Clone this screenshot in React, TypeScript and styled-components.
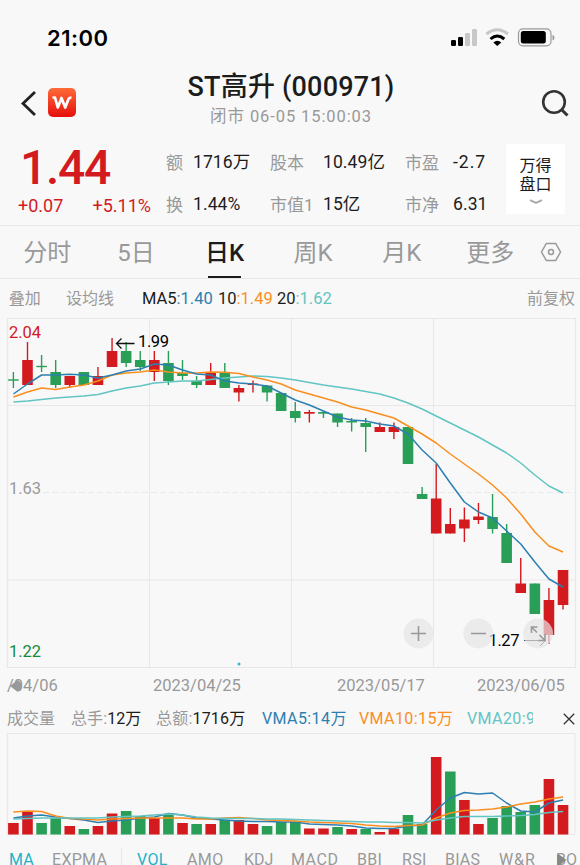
import * as React from "react";
import styled, { createGlobalStyle } from "styled-components";

const RED = "#d31a1f";
const GREEN = "#299e57";
const BLUE = "#2c7fb0";
const ORANGE = "#fa8e1e";
const TEAL = "#62c4c3";
const GREY = "#999";
const LINE = "#e8e8e8";

const GlobalStyle = createGlobalStyle`
  * {
    box-sizing: border-box;
  }
  body {
    margin: 0;
    background: #f8f8f8;
    overflow: hidden;
  }
`;

const Screen = styled.div`
  display: flex;
  flex-direction: column;
  width: 580px;
  height: 865px;
  overflow: hidden;
  background: #f8f8f8;
  color: #1c1c1c;
  font-family: Roboto, "Noto Sans CJK SC", sans-serif;
  font-size: 17px;
  line-height: 1;
  white-space: nowrap;
`;

const StatusBar = styled.div`
  display: flex;
  flex: none;
  align-items: center;
  height: 66px;
  padding: 9px 25px 0 47px;
`;

const Clock = styled.div`
  flex: 1;
  color: #000;
  font: 600 22px/1 Inter, sans-serif;
  letter-spacing: 0.5px;
`;

const Header = styled.div`
  display: flex;
  flex: none;
  align-items: flex-start;
  height: 66px;
  padding: 0 10px 0 20px;
`;

const HeaderSide = styled.div<{ $right?: boolean }>`
  display: flex;
  gap: 11px;
  width: ${({ $right }) => ($right ? 68 : 60)}px;
  padding-top: 22px;
  justify-content: ${({ $right }) => ($right ? "flex-end" : "flex-start")};
`;

const AppLogo = styled.div`
  flex: none;
  width: 28px;
  height: 29px;
  border-radius: 5px;
  background: linear-gradient(#ff6b38, #e50f0c);
`;

const TitleBlock = styled.div`
  flex: 1;
  display: flex;
  flex-direction: column;
  align-items: center;
  padding-top: 8px;
`;

const Title = styled.div`
  height: 27px;
  font-size: 27px;
  font-weight: 500;
  letter-spacing: 0.2px;
`;

const Subtitle = styled.div`
  margin-top: 8px;
  color: ${GREY};
  font-size: 16.5px;
  letter-spacing: 0.9px;
`;

const Quote = styled.div`
  display: flex;
  flex: none;
  height: 94px;
  padding-right: 15px;
  border-bottom: 1px solid ${LINE};
`;

const PriceBlock = styled.div`
  width: 166px;
  padding: 12px 15px 0 18px;
  color: ${RED};
`;

const Price = styled.div`
  padding-left: 2px;
  font-size: 48px;
  font-weight: 500;
  letter-spacing: -1.3px;
`;

const Changes = styled.div`
  display: flex;
  justify-content: space-between;
  margin-top: 5px;
  font-size: 18px;
`;

const Stats = styled.div`
  display: grid;
  flex: 1;
  grid-template-columns: 27px 77px 53px 82px 48px 1fr;
  grid-template-rows: 42px 42px;
  align-items: center;
  padding-top: 10px;
`;

const StatLabel = styled.span`
  position: relative;
  color: ${GREY};
`;

const StatValue = styled.span<{ $wide?: boolean }>`
  font-size: 17.5px;
  letter-spacing: ${({ $wide }) => ($wide ? 1 : 0.1)}px;
`;

const Panel = styled.div`
  display: flex;
  flex-direction: column;
  align-items: center;
  width: 59px;
  height: 70px;
  margin-top: 12px;
  padding-top: 12px;
  background: #fff;
  font-size: 16px;
  line-height: 19px;
`;

const Chevron = styled.svg`
  margin-top: 5px;
`;

const Tabs = styled.div`
  display: flex;
  flex: none;
  align-items: center;
  height: 53px;
  padding-left: 3px;
  border-bottom: 1px solid ${LINE};
`;

const Tab = styled.div<{ $active?: boolean }>`
  display: flex;
  flex-direction: column;
  align-items: center;
  width: 88.6px;
  height: 53px;
  padding-top: 15px;
  color: ${({ $active }) => ($active ? "#1c1c1c" : GREY)};
  font-size: 24px;
  font-weight: ${({ $active }) => ($active ? 500 : 400)};

  &::after {
    content: "";
    width: 33px;
    height: 2px;
    margin-top: 11px;
    background: ${({ $active }) => ($active ? "#1c1c1c" : "transparent")};
  }
`;

const Settings = styled.div`
  display: flex;
  margin-left: 5px;
`;

const Legend = styled.div<{ $height: number }>`
  display: flex;
  flex: none;
  align-items: center;
  height: ${({ $height }) => $height}px;
  padding: 0 4px 0 7px;
`;

const Cell = styled.span<{
  $w?: number;
  $color?: string;
  $size?: number;
  $ls?: number;
  $clip?: boolean;
}>`
  flex: none;
  overflow: ${({ $clip }) => ($clip ? "hidden" : "visible")};
  width: ${({ $w }) => ($w ? `${$w}px` : "auto")};
  color: ${({ $color }) => $color || GREY};
  font-size: ${({ $size }) => $size || 16}px;
  line-height: 24px;
  letter-spacing: ${({ $ls }) => $ls || 0}px;
`;

const Part = styled.span<{ $color: string }>`
  color: ${({ $color }) => $color};
`;

const CloseIcon = styled.svg`
  margin-left: 30px;
`;

const Chart = styled.svg`
  display: block;
  flex: none;
  font-family: Roboto, sans-serif;
`;

const Dates = styled.div`
  position: relative;
  display: flex;
  flex: none;
  align-items: center;
  height: 36px;
  padding-left: 7px;
`;

const Indicators = styled.div`
  position: relative;
  display: flex;
  flex: none;
  align-items: center;
  height: 50px;
  padding-left: 9px;
`;

// scroll hints that lie over the first date and the last indicator
const ScrollHint = styled.svg<{ $left: number; $top: number }>`
  position: absolute;
  left: ${({ $left }) => $left}px;
  top: ${({ $top }) => $top}px;
`;

const Divider = styled.i`
  flex: none;
  width: 1px;
  height: 24px;
  margin-right: 15px;
  background: ${LINE};
`;

type Candle = [color: string, high: number, top: number, bottom: number, low: number];

const CANDLES: Candle[] = [
  [GREEN, 372, 379.3, 380.7, 388],
  [RED, 342, 360, 385, 385],
  [GREEN, 355, 365.8, 367.2, 372],
  [GREEN, 360, 372, 385, 388],
  [RED, 376, 376, 385, 388],
  [GREEN, 372, 372, 385, 385],
  [RED, 367, 376, 385, 385],
  [RED, 338, 351, 367, 367],
  [GREEN, 342, 351, 363, 367],
  [GREEN, 351, 360, 367, 371],
  [RED, 351, 360, 372, 381],
  [GREEN, 351, 363, 381, 385],
  [GREEN, 360, 373, 376, 380],
  [GREEN, 376, 381, 385, 388],
  [RED, 363, 372, 385, 385],
  [GREEN, 363, 372, 388, 388],
  [RED, 385, 388, 392.5, 401.5],
  [RED, 380.5, 383.5, 385, 392.5],
  [GREEN, 385, 385.5, 392.5, 401.5],
  [GREEN, 393, 393, 411, 411],
  [GREEN, 402, 411, 418, 422.5],
  [RED, 410, 412, 413.7, 422.5],
  [GREEN, 411, 412, 413.7, 418],
  [GREEN, 413.5, 413.5, 422.5, 427],
  [GREEN, 418, 421, 422.5, 431.5],
  [GREEN, 418, 423, 427, 452],
  [RED, 422.5, 427, 432, 432],
  [RED, 422.5, 427, 432, 439],
  [GREEN, 427, 427, 464, 464],
  [GREEN, 487, 494, 499, 499],
  [RED, 464, 498.5, 533.5, 533.5],
  [RED, 508, 524, 533.5, 533.5],
  [RED, 507.5, 519.5, 528.5, 542],
  [RED, 503, 516.5, 520, 524],
  [GREEN, 494, 517, 529, 533.5],
  [GREEN, 524, 533, 563, 563],
  [RED, 558, 583.5, 593, 593],
  [GREEN, 583.5, 583.5, 614, 614],
  [RED, 588, 600, 635, 644],
  [RED, 570, 570, 605, 609.5],
];

const MA5 = [394, 384, 375, 375, 374.3, 375, 378, 375, 371, 369, 364, 365, 370, 374, 375, 381, 383, 384, 386, 393, 400, 405, 411, 417, 420, 421, 424, 426, 434, 450, 463, 483, 502, 512, 518, 531, 544, 562, 579, 587];
const MA10 = [397, 392, 388, 389.5, 387, 385, 381, 375, 373, 372, 370, 372, 373, 373, 372, 372.3, 373.5, 377, 380, 384, 390, 394, 398, 402, 407, 410, 414, 418, 426, 434, 443, 454, 464, 474, 485, 498, 514, 532, 546, 552];
const MA20 = [402, 401, 399.5, 398, 397, 396, 394.5, 391, 388, 386, 383, 382, 381, 381, 379.5, 378, 377, 376, 376.5, 378, 380, 382.5, 385, 387, 389, 391.5, 394, 398, 403, 409, 416, 423, 430, 437, 445, 453, 463, 475, 486, 493];

const VOLUMES = [823, 811, 823, 818, 826, 829, 826, 813.5, 811, 816, 818, 815, 823, 824, 824, 820, 820, 824, 826, 822, 822, 828.5, 828.5, 827, 829, 829, 832, 829, 815, 824, 757, 771.5, 800, 824, 818, 806, 812, 805, 779, 805];
const VOLUME_COLORS = "rrggrgrrggrgrgrgrrgggrrgrgrrggrgrrggggrr";
const VMA5 = [818, 816, 815, 817, 818.5, 820, 822.5, 821, 820, 818, 817, 813.5, 815, 818, 819, 820, 821, 821.5, 821.5, 822, 822, 824, 824.5, 825, 826, 828, 828.5, 828.5, 826, 825, 810, 798, 792.5, 794, 793, 803, 811, 812, 803, 800];
const VMA10 = [812, 811, 811.5, 816, 818.5, 819, 820, 819, 818.5, 818, 818, 818, 818, 819, 819, 818, 817.5, 818.5, 820, 820.5, 821, 822, 822.5, 823, 823.5, 825, 826, 826.5, 825.5, 825, 818, 813, 810.5, 810, 809, 807, 804, 802, 799, 797];
const VMA20 = [819, 818.5, 818, 818, 818, 818, 818, 817, 816.5, 816, 815, 814, 815, 817, 818, 818.5, 818.5, 818.5, 819, 819, 819.5, 820, 820.5, 821, 821.5, 822, 822, 822.5, 822.5, 823, 820, 818, 816.5, 816.5, 816.5, 816, 815.5, 814.5, 812.5, 811.5];

const xAt = (i: number): number => 13.4 + i * 14.093;

const Average: React.FC<{ data: number[]; color: string }> = ({ data, color }) => (
  <polyline
    points={data.map((y, i) => `${xAt(i)},${y}`).join(" ")}
    fill="none"
    stroke={color}
    strokeWidth="1.5"
    strokeLinejoin="round"
  />
);

const PriceChart: React.FC = () => (
  <Chart width="580" height="350" viewBox="0 318 580 350">
    <g stroke={LINE} fill="none">
      <path d="M7 318.5H575.5V667.5M7 667.5H576M7 405.5H575M7 580H575" strokeWidth="1.2" />
      <path d="M7.5 318V668" strokeWidth="1.5" />
      <path d="M149.5 318V667M291.5 318V667M433.5 318V667" />
      <path d="M43 492.5H575" strokeDasharray="6 3" />
    </g>
    {CANDLES.map(([color, high, top, bottom, low], i) => (
      <g key={i} fill={color}>
        <rect x={xAt(i) - 0.7} y={high} width="1.4" height={low - high} />
        <rect x={xAt(i) - 5.3} y={top} width="10.6" height={bottom - top} />
      </g>
    ))}
    <Average data={MA20} color={TEAL} />
    <Average data={MA10} color={ORANGE} />
    <Average data={MA5} color={BLUE} />
    <g fontSize="16.5">
      <text x="9" y="337.5" fill={RED} textLength="32">2.04</text>
      <text x="9" y="493.5" fill={GREY} textLength="32">1.63</text>
      <text x="9" y="657" fill="#148a3c" textLength="32">1.22</text>
      <text x="138" y="347" fill="#000" textLength="31">1.99</text>
      <text x="488.5" y="645.5" fill="#000" textLength="31">1.27</text>
    </g>
    <path d="M134.5 343.5H116.5M121.5 338.5L116.5 343.5L121.5 348.5" fill="none" stroke="#111" strokeWidth="1.3" />
    <path d="M524 640.5H545M540 635L545.5 640.5L540 646" fill="none" stroke="#333" strokeWidth="1" />
    <circle cx="239" cy="664" r="1.5" fill="#39b4c8" />
    <g fill="#e5e5e5" fillOpacity=".7">
      <circle cx="418.5" cy="633.5" r="15" />
      <circle cx="478.3" cy="633.5" r="15" />
      <circle cx="538" cy="633.5" r="15" />
    </g>
    <g fill="none" stroke={GREY} strokeWidth="1.6">
      <path d="M411 633.5H426M418.5 626V641M471 633.5H486" />
      <path d="M531.5 633V627H537.5M531.5 627L537 632.5M539.5 635L545 640.5M545 634V640.5H538.5" />
    </g>
  </Chart>
);

const VolumeChart: React.FC = () => (
  <Chart width="580" height="102" viewBox="0 733 580 102">
    <path d="M7 733.5H575M575 733V834.5M7 834.5H575" fill="none" stroke={LINE} />
    <path d="M7.5 733V835" stroke={LINE} strokeWidth="1.5" />
    {VOLUMES.map((top, i) => (
      <rect
        key={i}
        x={xAt(i) - 5.3}
        y={top}
        width="10.6"
        height={834.5 - top}
        fill={VOLUME_COLORS[i] === "r" ? RED : GREEN}
      />
    ))}
    <Average data={VMA5} color={BLUE} />
    <Average data={VMA10} color={ORANGE} />
    <Average data={VMA20} color={TEAL} />
  </Chart>
);

const StatusIcons: React.FC = () => (
  <svg width="105" height="20" viewBox="450 28 105 20">
    <rect x="451" y="40" width="5" height="6" rx="1.3" />
    <rect x="458" y="37" width="5" height="9" rx="1.3" />
    <g fill="#c8c8c8">
      <rect x="465" y="33" width="5" height="13" rx="1.3" />
      <rect x="472" y="29" width="5" height="17" rx="1.3" />
    </g>
    <g fill="none" strokeWidth="3">
      <path d="M486.5 34Q497.3 25.5 508 34" stroke="#c8c8c8" />
      <path d="M490.5 39Q497.3 33 504.3 39" stroke="#000" />
    </g>
    <path d="M493.3 42.5Q497.3 39 501.3 42.5L497.3 46Z" />
    <rect x="518.5" y="28.8" width="32.5" height="17" rx="4.5" fill="none" stroke="#999" strokeWidth="1.2" />
    <rect x="520.8" y="31" width="25" height="12.6" rx="2.5" />
    <path d="M552.5 35V40.5Q554.5 40 554.5 37.7T552.5 35" fill="#999" />
  </svg>
);

const App: React.FC = (): React.ReactElement => {
  return (
    <Screen>
      <GlobalStyle />
      <StatusBar>
        <Clock>21:00</Clock>
        <StatusIcons />
      </StatusBar>
      <Header>
        <HeaderSide>
          <svg width="17" height="29" viewBox="0 0 17 29">
            <path d="M15 4L3 15.5L15 27" fill="none" stroke="#222" strokeWidth="2.8" />
          </svg>
          <AppLogo>
            <svg width="28" height="29" viewBox="0 0 28 29">
              <path
                d="M4.5 9.5H7L9.8 19.5L13.5 10L17.2 19.5L20.5 11Q21.2 9.5 23.5 9.5"
                fill="none"
                stroke="#fff"
                strokeWidth="2.7"
                strokeLinejoin="round"
              />
            </svg>
          </AppLogo>
        </HeaderSide>
        <TitleBlock>
          <Title>ST高升 (000971)</Title>
          <Subtitle>闭市 06-05 15:00:03</Subtitle>
        </TitleBlock>
        <HeaderSide $right>
          <svg width="30" height="30" viewBox="540 88 30 30">
            <circle cx="554" cy="102" r="10.8" fill="none" stroke="#333" strokeWidth="2.6" />
            <path d="M561.5 109.5L567.5 115.5" stroke="#333" strokeWidth="3" />
          </svg>
        </HeaderSide>
      </Header>
      <Quote>
        <PriceBlock>
          <Price>1.44</Price>
          <Changes>
            <span>+0.07</span>
            <span>+5.11%</span>
          </Changes>
        </PriceBlock>
        <Stats>
          <StatLabel>额</StatLabel>
          <StatValue>1716万</StatValue>
          <StatLabel>股本</StatLabel>
          <StatValue>10.49亿</StatValue>
          <StatLabel>市盈</StatLabel>
          <StatValue $wide>-2.7</StatValue>
          <StatLabel>换</StatLabel>
          <StatValue>1.44%</StatValue>
          <StatLabel>市值1</StatLabel>
          <StatValue>15亿</StatValue>
          <StatLabel>市净</StatLabel>
          <StatValue>6.31</StatValue>
        </Stats>
        <Panel>
          <span>万得</span>
          <span>盘口</span>
          <Chevron width="14" height="6" viewBox="0 0 14 6">
            <path d="M1 1.2L7 4L13 1.2" fill="none" stroke="#aaa" strokeWidth="2" />
          </Chevron>
        </Panel>
      </Quote>
      <Tabs>
        <Tab>分时</Tab>
        <Tab>5日</Tab>
        <Tab $active>日K</Tab>
        <Tab>周K</Tab>
        <Tab>月K</Tab>
        <Tab>更多</Tab>
        <Settings>
          <svg width="22" height="22" viewBox="0 0 22 22" fill="none" stroke={GREY} strokeWidth="1.5">
            <path d="M6.3 2.5H15.7L20.5 11L15.7 19.5H6.3L1.5 11Z" />
            <circle cx="11" cy="11" r="2.5" />
          </svg>
        </Settings>
      </Tabs>
      <Legend $height={39}>
        <Cell $w={59}>&#8202;叠加</Cell>
        <Cell $w={76}>设均线</Cell>
        <Cell $w={76} $size={16.5}>
          <Part $color="#1c1c1c">MA5</Part>
          <Part $color={BLUE}>:1.40</Part>
        </Cell>
        <Cell $w={59} $size={16.5}>
          <Part $color="#1c1c1c">10</Part>
          <Part $color={ORANGE}>:1.49</Part>
        </Cell>
        <Cell $w={250} $size={16.5}>
          <Part $color="#1c1c1c">20</Part>
          <Part $color={TEAL}>:1.62</Part>
        </Cell>
        <Cell>前复权</Cell>
      </Legend>
      <PriceChart />
      <Dates>
        <Cell $w={146} $size={16.5}>/04/06</Cell>
        <Cell $w={184} $size={16.5}>2023/04/25</Cell>
        <Cell $w={140} $size={16.5}>2023/05/17</Cell>
        <Cell $size={16.5}>2023/06/05</Cell>
        <ScrollHint $left={10} $top={12} width="12" height="12" viewBox="0 0 12 12">
          <path d="M0 6L7 .5H9Q11.5 3 11.5 6T9 11.5H7Z" fill={GREY} />
        </ScrollHint>
      </Dates>
      <Legend $height={29}>
        <Cell $w={64}>成交量</Cell>
        <Cell $w={85} $ls={0.1}>
          总手:<Part $color="#1c1c1c">12万</Part>
        </Cell>
        <Cell $w={106} $ls={0.2}>
          总额:<Part $color="#1c1c1c">1716万</Part>
        </Cell>
        <Cell $w={97} $color={BLUE} $ls={0.4}>VMA5:14万</Cell>
        <Cell $w={108} $color={ORANGE} $ls={0.4}>VMA10:15万</Cell>
        <Cell $w={66} $color={TEAL} $ls={0.4} $clip>VMA20:9万</Cell>
        <CloseIcon width="12" height="12" viewBox="0 0 12 12">
          <path d="M.8 .8L11.2 11.2M11.2 .8L.8 11.2" stroke="#333" strokeWidth="1.3" />
        </CloseIcon>
      </Legend>
      <VolumeChart />
      <Indicators>
        <Cell $w={43} $color="#20b2c8" $ls={0.2}>MA</Cell>
        <Cell $w={69} $ls={0.3}>EXPMA</Cell>
        <Divider />
        <Cell $w={50} $color="#20b2c8" $ls={0.3}>VOL</Cell>
        <Cell $w={57} $ls={0.4}>AMO</Cell>
        <Cell $w={47}>KDJ</Cell>
        <Cell $w={66} $ls={0.5}>MACD</Cell>
        <Cell $w={45} $ls={0.3}>BBI</Cell>
        <Cell $w={43} $ls={0.3}>RSI</Cell>
        <Cell $w={54} $ls={0.2}>BIAS</Cell>
        <Cell $w={57} $ls={0.9}>W&amp;R</Cell>
        <Cell $w={21} $clip>BOLL</Cell>
        <ScrollHint $left={557} $top={19} width="10" height="12" viewBox="0 0 10 12">
          <path d="M0 .5H2L9.5 6L2 11.5H0Z" fill="#888" />
        </ScrollHint>
      </Indicators>
    </Screen>
  );
};

export default App;
